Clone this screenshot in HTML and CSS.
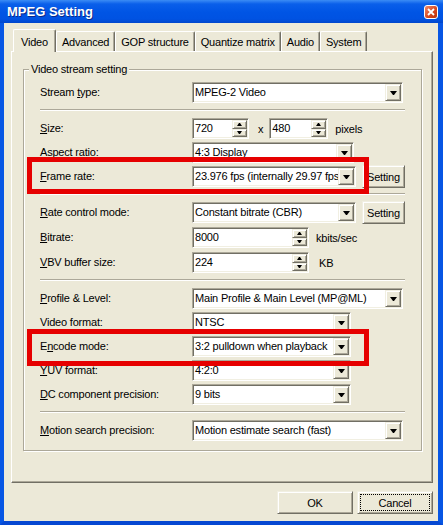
FILE: index.html
```html
<!DOCTYPE html>
<html lang="en">
<head>
  <meta charset="UTF-8">
  <meta name="viewport" content="width=device-width, initial-scale=1.0">
  <title>MPEG Setting</title>
  <link rel="stylesheet" href="styles.css">
</head>
<body>
<div class="window">
  <div class="titlebar">
    <span class="title">MPEG Setting</span>
    <span class="close-btn">
      <svg width="8" height="8" viewBox="0 0 8 8"><path d="M1 1l6 6M7 1L1 7" stroke="#fff" stroke-width="1.8" fill="none"/></svg>
    </span>
  </div>

  <div class="frame">
    <div class="tabs">
      <div class="tab active">Video</div>
      <div class="tab">Advanced</div>
      <div class="tab">GOP structure</div>
      <div class="tab">Quantize matrix</div>
      <div class="tab">Audio</div>
      <div class="tab">System</div>
    </div>

    <div class="panel">
      <fieldset class="group">
        <legend>Video stream setting</legend>

        <div class="row">
          <label>Stream <u>t</u>ype:</label>
          <div class="combo full"><span class="value">MPEG-2 Video</span><span class="drop"></span></div>
        </div>

        <div class="sep"></div>

        <div class="block">
          <div class="row">
            <label><u>S</u>ize:</label>
            <div class="spin size-w"><span class="value">720</span><span class="arrows"><span class="up"></span><span class="down"></span></span></div>
            <span class="times">x</span>
            <div class="spin size-h"><span class="value">480</span><span class="arrows"><span class="up"></span><span class="down"></span></span></div>
            <span class="unit">pixels</span>
          </div>
          <div class="row">
            <label>Aspect ratio:</label>
            <div class="combo aspect"><span class="value">4:3 Display</span><span class="drop"></span></div>
          </div>
          <div class="row">
            <label><u>F</u>rame rate:</label>
            <div class="combo mid"><span class="value">23.976 fps (internally 29.97 fps)</span><span class="drop"></span></div>
            <button class="btn small">Setting</button>
          </div>
        </div>

        <div class="sep"></div>

        <div class="block loose">
          <div class="row">
            <label><u>R</u>ate control mode:</label>
            <div class="combo mid"><span class="value">Constant bitrate (CBR)</span><span class="drop"></span></div>
            <button class="btn small">Setting</button>
          </div>
          <div class="row">
            <label><u>B</u>itrate:</label>
            <div class="spin long"><span class="value">8000</span><span class="arrows"><span class="up"></span><span class="down"></span></span></div>
            <span class="unit">kbits/sec</span>
          </div>
          <div class="row">
            <label><u>V</u>BV buffer size:</label>
            <div class="spin long"><span class="value">224</span><span class="arrows"><span class="up"></span><span class="down"></span></span></div>
            <span class="unit kb">KB</span>
          </div>
        </div>

        <div class="sep"></div>

        <div class="block">
          <div class="row">
            <label><u>P</u>rofile &amp; Level:</label>
            <div class="combo full"><span class="value">Main Profile &amp; Main Level (MP@ML)</span><span class="drop"></span></div>
          </div>
          <div class="row">
            <label>Video format:</label>
            <div class="combo short"><span class="value">NTSC</span><span class="drop"></span></div>
          </div>
          <div class="row">
            <label>E<u>n</u>code mode:</label>
            <div class="combo short"><span class="value">3:2 pulldown when playback</span><span class="drop"></span></div>
          </div>
          <div class="row">
            <label><u>Y</u>UV format:</label>
            <div class="combo short"><span class="value">4:2:0</span><span class="drop"></span></div>
          </div>
          <div class="row">
            <label><u>D</u>C component precision:</label>
            <div class="combo short"><span class="value">9 bits</span><span class="drop"></span></div>
          </div>
        </div>

        <div class="sep"></div>

        <div class="row">
          <label><u>M</u>otion search precision:</label>
          <div class="combo full"><span class="value">Motion estimate search (fast)</span><span class="drop"></span></div>
        </div>
      </fieldset>
    </div>

    <div class="buttons">
      <button class="btn">OK</button>
      <button class="btn focused">Cancel</button>
    </div>
  </div>

  <!-- red highlight boxes drawn over the dialog -->
  <div class="mark mark-frame"></div>
  <div class="mark mark-encode"></div>
</div>
</body>
</html>
```

FILE: styles.css
```css
body {
  margin: 0;
  padding: 0;
  background-color: #ece9d8;
  color: #000;
  font-family: "Liberation Sans", Arial, sans-serif;
  font-size: 11px;
}

.window {
  position: relative;
  width: 443px;
  height: 525px;
  display: flex;
  flex-direction: column;
  background-color: #ece9d8;
  overflow: hidden;
}

/* title bar */
.titlebar {
  height: 23px;
  flex-shrink: 0;
  display: flex;
  align-items: center;
  justify-content: space-between;
  padding: 0 5px 0 7px;
  background: linear-gradient(#3b8cf5 0, #0a5fea 4px, #0055e5 12px, #0052e2 19px, #0046cc 23px);
}

.title {
  color: white;
  font-size: 13px;
  font-weight: bold;
  text-shadow: 1px 1px 0 #0a2a8a;
}

.close-btn {
  width: 12px;
  height: 12px;
  display: flex;
  align-items: center;
  justify-content: center;
  border: 1px solid #fff;
  border-radius: 3px;
  background: linear-gradient(135deg, #f0896a, #d6451c 60%, #b8330f);
}

/* window frame */
.frame {
  flex: 1;
  display: flex;
  flex-direction: column;
  border-left: 4px solid #0756e4;
  border-right: 5px solid #0756e4;
  border-bottom: 4px solid #0648d2;
  letter-spacing: -0.2px;
}

/* tabs */
.tabs {
  display: flex;
  align-items: flex-end;
  height: 22px;
  margin: 6px 0 0 9px;
}

.tab {
  height: 20px;
  box-sizing: border-box;
  padding: 4px 5px 0;
  line-height: 13px;
  white-space: nowrap;
  border-top: 1px solid #fff;
  border-left: 1px solid #fff;
  border-right: 1px solid #716f64;
  border-radius: 2px 2px 0 0;
  box-shadow: inset -1px 0 0 #aca899;
}

.tab.active {
  position: relative;
  z-index: 1;
  height: 23px;
  margin-bottom: -1px;
  padding: 6px 7px 0;
  background-color: #ece9d8;
}

.panel {
  width: 422px;
  height: 432px;
  box-sizing: border-box;
  margin-left: 7px;
  padding: 11px 0 0 11px;
  border: 1px solid;
  border-color: #fff #716f64 #716f64 #fff;
  box-shadow: inset -1px -1px 0 #aca899;
}

/* group box */
.group {
  width: 397px;
  box-sizing: border-box;
  margin: 0;
  padding: 6px 16px 9px;
  border: 1px solid #aca899;
  box-shadow: 1px 1px 0 #fff, inset 1px 1px 0 #fff;
}

.group legend {
  margin-left: -11px;
  padding: 0 2px;
  line-height: 13px;
  background-color: #ece9d8;
}

.block {
  display: flex;
  flex-direction: column;
  gap: 3px;
}

.block.loose {
  gap: 4px;
}

.row {
  display: flex;
  align-items: center;
  height: 21px;
}

.row label {
  width: 152px;
  flex-shrink: 0;
  line-height: 13px;
}

.sep {
  height: 1px;
  margin: 6px 0 7px;
  border-top: 1px solid #aca899;
  border-bottom: 1px solid #fff;
  height: 0;
}

/* sunken fields */
.combo, .spin {
  display: flex;
  height: 21px;
  box-sizing: border-box;
  padding: 1px;
  background-color: #fff;
  border: 1px solid;
  border-color: #aca899 #fff #fff #aca899;
  box-shadow: inset 1px 1px 0 #716f64, inset -1px -1px 0 #f1efe2;
}

.combo.full { width: 211px; }
.combo.mid { width: 164px; }
.combo.aspect { width: 162px; }
.combo.short { width: 159px; }

.spin.size-w { width: 57px; }
.spin.size-h { width: 59px; }
.spin.long { width: 117px; }

.value {
  flex: 1;
  min-width: 0;
  padding-left: 1px;
  line-height: 17px;
  white-space: nowrap;
  overflow: hidden;
}

/* raised parts */
.drop, .arrows span, .btn {
  box-sizing: border-box;
  background-color: #ece9d8;
  border: 1px solid;
  border-color: #f1efe2 #716f64 #716f64 #f1efe2;
  box-shadow: inset 1px 1px 0 #fff, inset -1px -1px 0 #aca899;
}

.drop {
  width: 16px;
  height: 17px;
  flex-shrink: 0;
  display: flex;
  align-items: center;
  justify-content: center;
}

.drop::after {
  content: "";
  width: 1px;
  height: 0;
  border-top: 4px solid #000;
  border-left: 3px solid transparent;
  border-right: 3px solid transparent;
}

.arrows {
  width: 15px;
  flex-shrink: 0;
  display: flex;
  flex-direction: column;
}

.arrows span {
  flex: 1;
  display: flex;
  align-items: center;
  justify-content: center;
}

.arrows .up::after,
.arrows .down::after {
  content: "";
  width: 1px;
  height: 0;
  border-left: 2px solid transparent;
  border-right: 2px solid transparent;
}

.arrows .up::after { border-bottom: 3px solid #000; }
.arrows .down::after { border-top: 3px solid #000; }

.times {
  margin: 0 6px 0 9px;
}

.unit {
  margin-left: 7px;
}

.unit.kb {
  margin-left: 10px;
}

/* buttons */
.btn {
  width: 76px;
  height: 23px;
  padding: 0;
  font-family: inherit;
  font-size: 11px;
  letter-spacing: -0.2px;
  color: #000;
}

.btn.small {
  width: 43px;
  margin-left: 6px;
  flex-shrink: 0;
}

.btn.focused {
  outline: 1px dotted #000;
  outline-offset: -4px;
}

.buttons {
  display: flex;
  justify-content: flex-end;
  gap: 4px;
  margin: 8px 5px 0 0;
}

/* red highlight marks */
.mark {
  position: absolute;
  left: 27px;
  width: 342px;
  height: 37px;
  box-sizing: border-box;
  border: 5px solid #e60000;
  z-index: 2;
}

.mark-frame { top: 157px; }
.mark-encode { top: 329px; }
```
